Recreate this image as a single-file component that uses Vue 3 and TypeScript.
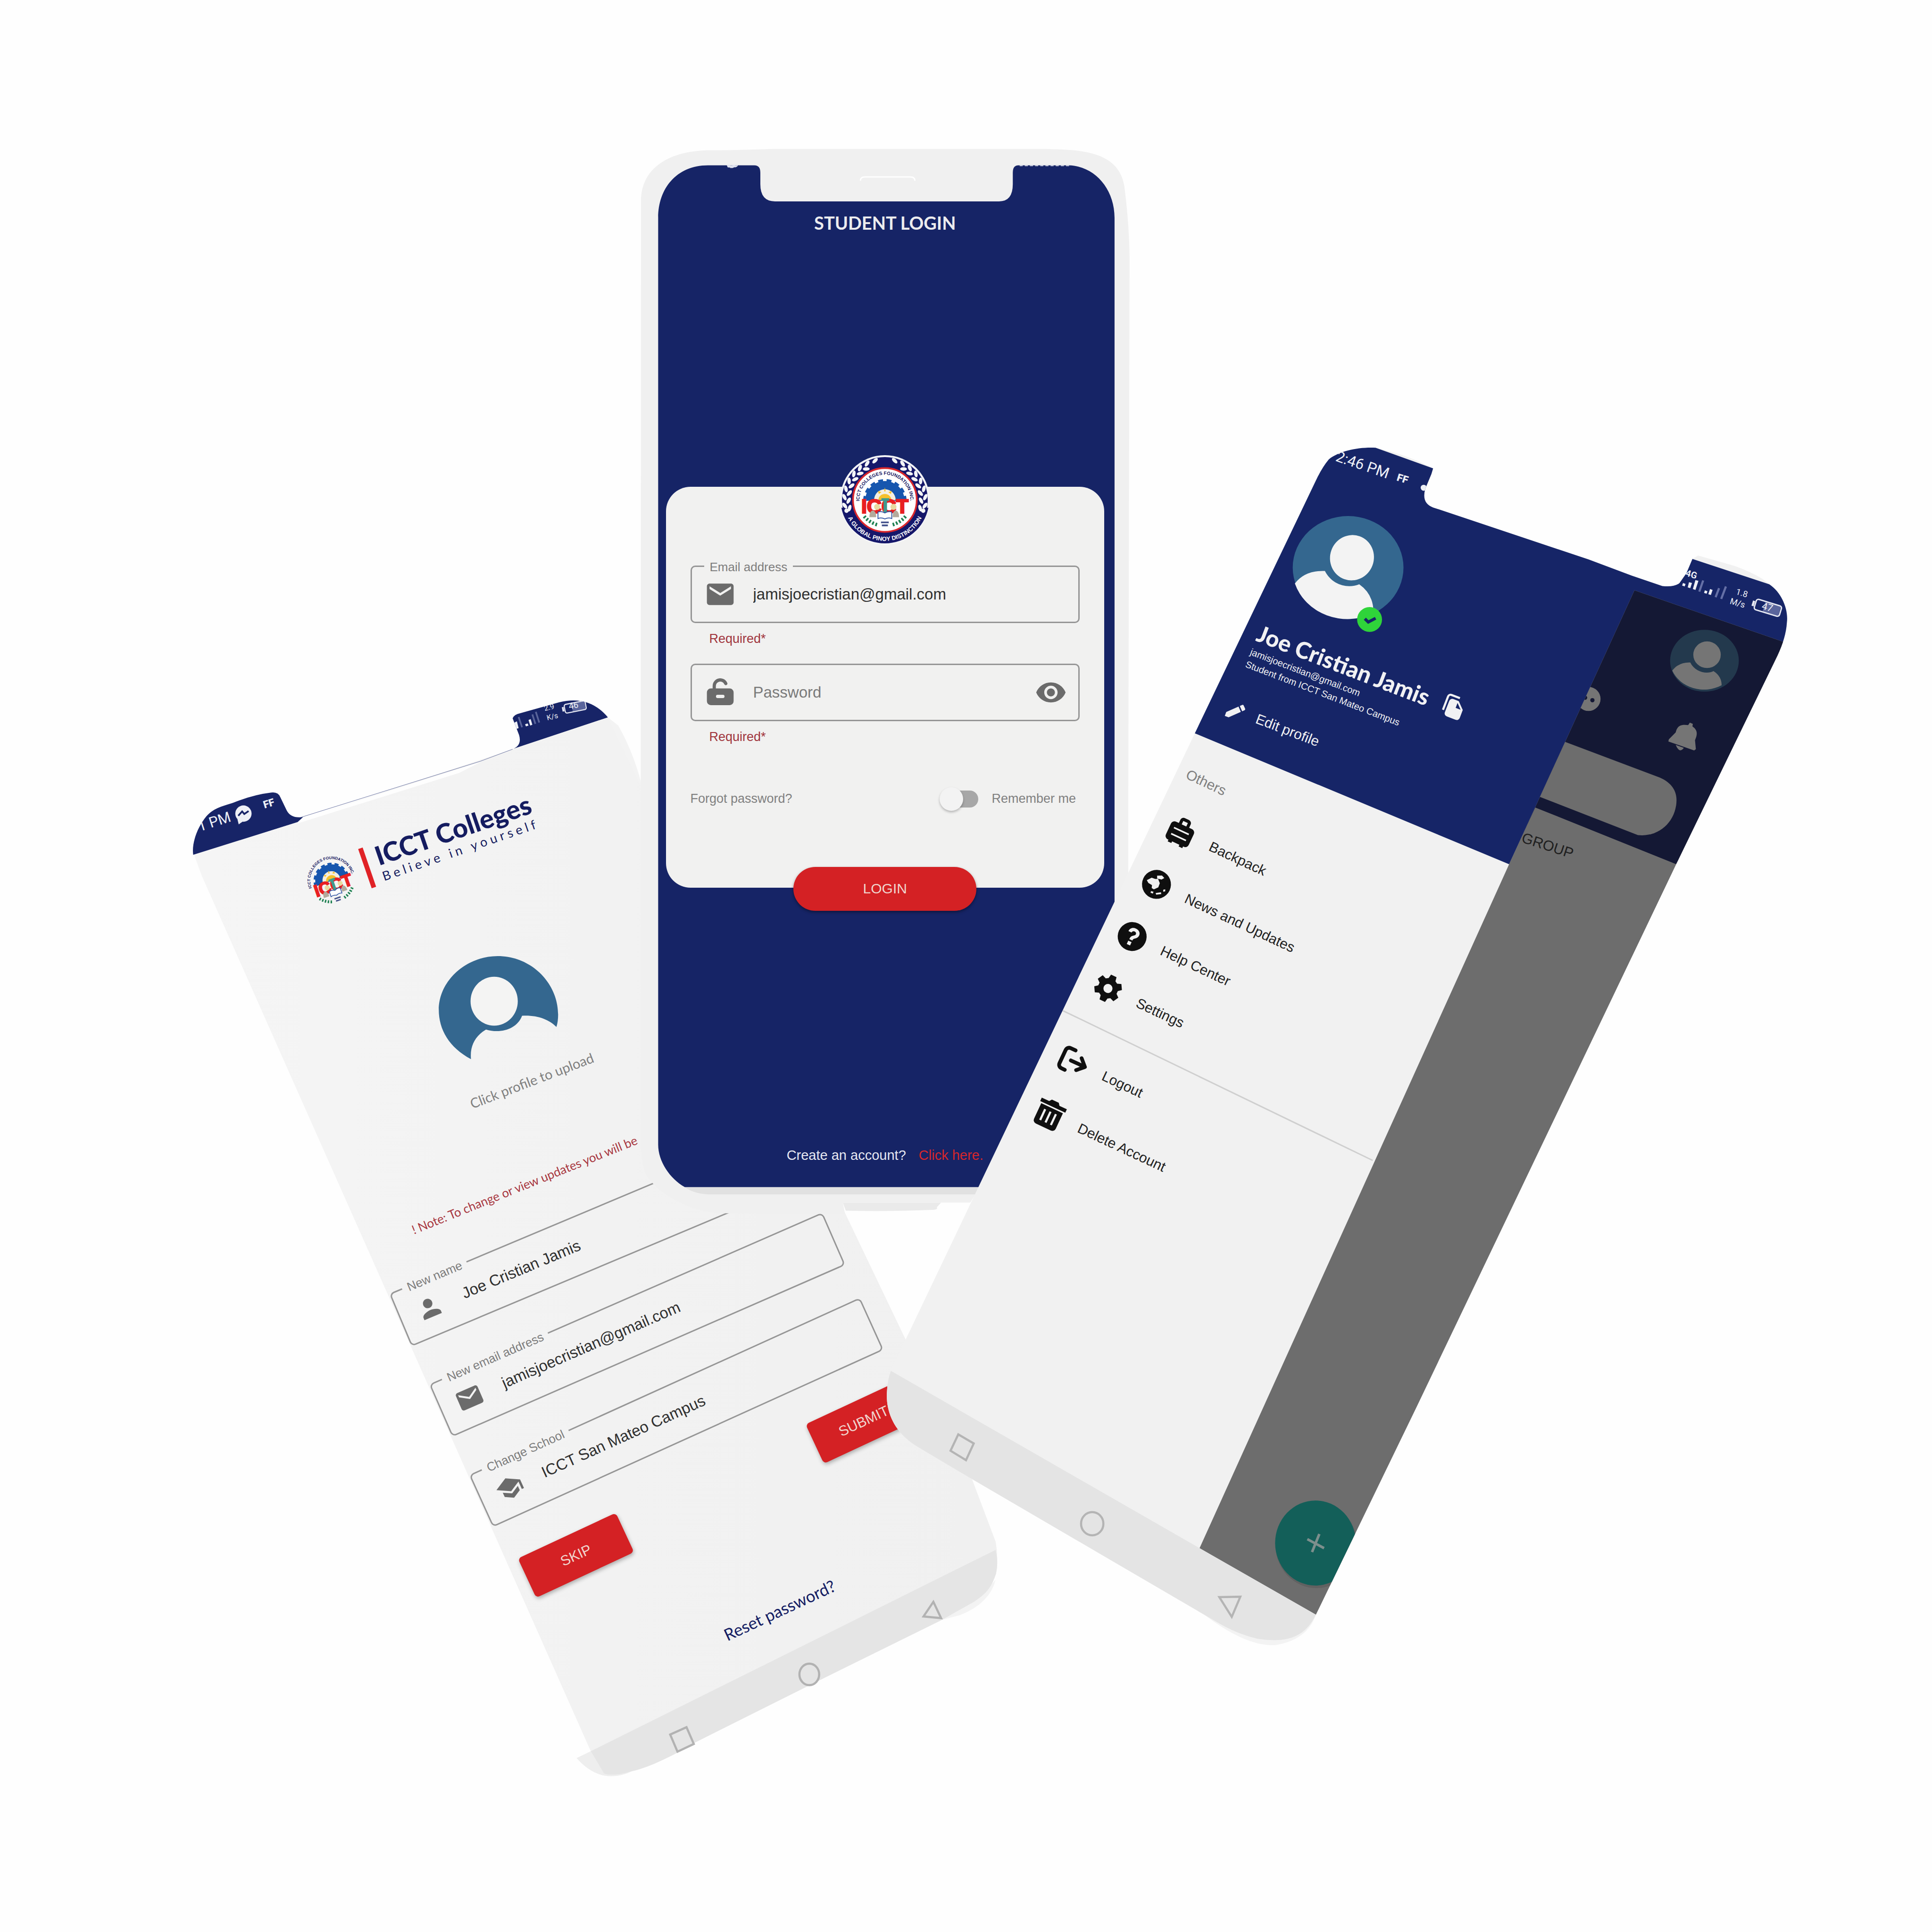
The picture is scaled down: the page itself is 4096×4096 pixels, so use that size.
<script setup lang="ts">
import { ref } from 'vue'

interface Field {
  id: string
  label: string
  icon: string
  value: string
}

interface MenuItem {
  label: string
  icon: string
}

const icons: Record<string, string> = {
  mail: 'M20 4H4c-1.1 0-2 .9-2 2v12c0 1.1.9 2 2 2h16c1.1 0 2-.9 2-2V6c0-1.100-.9-2-2-2zm0 4l-8 5-8-5V6l8 5 8-5v2z',
  person: 'M12 12c2.210 0 4-1.790 4-4s-1.790-4-4-4-4 1.790-4 4 1.790 4 4 4zm0 2c-2.670 0-8 1.340-8 4v2h16v-2c0-2.660-5.330-4-8-4z',
  school: 'M5 13.180v4L12 21l7-3.820v-4L12 17l-7-3.820zM12 3L1 9l11 6 9-4.910V17h2V9L12 3z',
  lock: 'M5 21.500a3 3 0 0 1-3-3v-6.500a3 3 0 0 1 3-3h1.300V7.200a5.700 5.700 0 0 1 10.800-2.600l.2.400a1.200 1.200 0 0 1-2.100 1.100l-.2-.3A3.300 3.300 0 0 0 8.700 7.200V9H19a3 3 0 0 1 3 3v6.500a3 3 0 0 1-3 3zM10 13.800a1.200 1.200 0 0 0 0 2.400h4a1.200 1.200 0 0 0 0-2.400z',
  eye: 'M12 4.500C7 4.500 2.730 7.610 1 12c1.730 4.390 6 7.500 11 7.500s9.270-3.110 11-7.500c-1.730-4.390-6-7.500-11-7.500zM12 17c-2.760 0-5-2.240-5-5s2.240-5 5-5 5 2.240 5 5-2.240 5-5 5zm0-8c-1.660 0-3 1.340-3 3s1.340 3 3 3 3-1.340 3-3-1.340-3-3-3z',
  luggage: 'M7.500 6V3.200A2.700 2.700 0 0 1 10.200.5h3.600a2.700 2.700 0 0 1 2.700 2.700V6H19a3 3 0 0 1 3 3v9.500a3 3 0 0 1-3 3h-.6V23h-3.200v-1.500H8.800V23H5.600v-1.500H5a3 3 0 0 1-3-3V9a3 3 0 0 1 3-3zM10 3v3h4V3zM5.500 10.300v1.300h13v-1.300zM5.500 15.600v1.300h13v-1.300z',
  globe: 'M12 .5a11.500 11.500 0 1 0 0 23 11.500 11.500 0 0 0 0-23zM9.500 5.500l3.500-1.700 2.500 1-1.500 2-3.500.7zM3.600 12.200l2.700-3.400 3-.3 2-1 2.700 2.500.3 3.500-2.500 3-2-.2-.8-2.300-3.300-.3zM10.300 18.700l2-.4.200 1.600-2 .1zM14.300 18.500l3.600-2.300.8 1.200-3.500 2.100zM18.700 13.600l1.300-1 .6 1.500-1.300.9z',
  help: 'M12 .5a11.500 11.500 0 1 0 0 23 11.500 11.500 0 0 0 0-23zM10.600 16.300h2.900v2.900h-2.900zM7.500 9.300c0-2.600 1.900-4.300 4.600-4.300s4.600 1.600 4.600 4c0 1.600-.8 2.600-2 3.500-1 .7-1.200 1.100-1.200 2.100v.2h-2.700v-.5c0-1.700.6-2.500 1.900-3.500.9-.7 1.200-1 1.200-1.700 0-.9-.7-1.600-1.800-1.600s-1.800.7-1.900 1.800z',
  settings: 'M9.600.8h4.800l.6 3.300 2 1.200 3.200-1.200 2.400 4.200-2.600 2.100v2.400l2.600 2.200-2.400 4.200-3.200-1.200-2 1.200-.6 3.300H9.600L9 19l-2-1.200L3.800 19l-2.400-4.200L4 12.800v-2.400L1.400 8.200 3.800 4 7 5.300l2-1.200zM12 8.200a3.600 3.600 0 1 0 0 7.200 3.600 3.600 0 0 0 0-7.200z',
  logout: 'M9.500 3.200H5.200a3 3 0 0 0-3 3v11.600a3 3 0 0 0 3 3h3M9.500 12H21.500M16.500 6.800L21.800 12l-5.300 5.200',
  trash: 'M1 2.800h6.500l1.500-2h6l1.500 2H23v3H1zM2.500 7h19v13.500a3 3 0 0 1-3 3h-13a3 3 0 0 1-3-3zM6.500 10v9.500h1.700V10zM11.200 10v9.500h1.700V10zM15.900 10v9.500h1.700V10z',
  pencil: 'M3 17.500V22h4.500L18 11.500 13.500 7zM21.200 8.300a1.200 1.200 0 0 0 0-1.700l-2.800-2.800a1.200 1.200 0 0 0-1.700 0L14.600 5.900l4.500 4.500z',
  copy: 'M3 18V4.500A3.500 3.500 0 0 1 6.500 1H15v2H6.500A1.500 1.500 0 0 0 5 4.500V18zM9.500 5H15l6.500 6.500v8a3 3 0 0 1-3 3h-9a3 3 0 0 1-3-3V8a3 3 0 0 1 3-3zM14.500 7v5h5z',
}

const email = ref('jamisjoecristian@gmail.com')
const password = ref('')
const remember = ref(false)

const profileFields = ref<Field[]>([
  { id: 'new-name', label: 'New name', icon: 'person', value: 'Joe Cristian Jamis' },
  { id: 'new-email', label: 'New email address', icon: 'mail', value: 'jamisjoecristian@gmail.com' },
  { id: 'school', label: 'Change School', icon: 'school', value: 'ICCT San Mateo Campus' },
])

const mainMenu: MenuItem[] = [
  { label: 'Backpack', icon: 'luggage' },
  { label: 'News and Updates', icon: 'globe' },
  { label: 'Help Center', icon: 'help' },
  { label: 'Settings', icon: 'settings' },
]

const accountMenu: MenuItem[] = [
  { label: 'Logout', icon: 'logout' },
  { label: 'Delete Account', icon: 'trash' },
]

// Wreath leaves, two rows on each side of the seal's upper ring.
const leaves: string[] = []
for (const side of [-1, 1]) {
  for (let i = 0; i < 8; i++) {
    const angle = side * (14 + i * 12)
    leaves.push(`rotate(${angle}) translate(0 -94) rotate(${side * 30})`)
    if (i > 0) leaves.push(`rotate(${angle + side * 5}) translate(0 -84) rotate(${side * -30})`)
  }
}
</script>

<template>
  <main class="stage">
    <!-- Edit profile phone -->
    <svg class="layer" viewBox="0 0 4500 4500" aria-hidden="true">
      <defs>
        <linearGradient id="pale" x1="0" x2="1" y1="0" y2="0">
          <stop offset="0" stop-color="#f5f5f5" />
          <stop offset="0.500" stop-color="#f2f2f2" />
          <stop offset="1" stop-color="#f0f0f0" />
        </linearGradient>
        <clipPath id="left-tabs">
          <path d="M450 1991C446 1962 461 1925 481 1901C500 1880 520 1878 545 1869Q590 1851 632 1846Q648 1844 653 1857L668 1888Q678 1907 706 1903L693 1915zM1196 1744Q1216 1735 1209 1712L1194 1673Q1197 1664 1212 1661L1302 1636Q1372 1618 1416 1671z" />
        </clipPath>
        <symbol id="battery" viewBox="0 0 70 30">
          <path d="M6 10H2V20H6" fill="#e6e8f2" stroke="#e6e8f2" stroke-width="2" />
          <rect x="28" y="4" width="36" height="22" fill="#5a659c" />
          <rect x="8" y="3" width="58" height="24" rx="5" fill="none" stroke="#e6e8f2" stroke-width="3" />
        </symbol>
      </defs>
      <path d="M1416 1671L1440 1690Q1480 1760 1500 1850V2000L1400 1700z" fill="#f3f3f3" />
      <path d="M452 1991L1416 1671 2261 3437 2319 3591Q2326 3630 2320 3665C2310 3695 2300 3710 2270 3730L2194 3773 1888 3924 1614 4061C1560 4095 1500 4120 1473 4125Q1430 4138 1407 4131L1376 4079 470 2040z" fill="url(#pale)" />
      <path d="M2319 3680Q2305 3735 2236 3762L2194 3773 2277 3724z" fill="#f3f3f3" />
      <path d="M1343 4095L1376 4079 1407 4131Q1440 4134 1473 4125Q1400 4160 1343 4095z" fill="#eeeeee" />
      <path d="M1376 4079L2319 3610Q2326 3640 2320 3665C2310 3695 2300 3710 2270 3730L2194 3773 1888 3924 1614 4061C1560 4095 1500 4120 1473 4125Q1430 4138 1407 4131z" fill="#e5e5e5" />
      <g fill="none" stroke="#b2b2b2" stroke-width="5">
        <path d="M1561 4040L1599 4023 1616 4062 1578 4080z" />
        <ellipse cx="1885" cy="3900" rx="23" ry="25" />
        <path d="M2174 3731L2192 3769 2151 3765z" />
      </g>
      <path d="M700 1908L1119 1775 1070 1800 693 1918z" fill="#fefefe" />
      <path d="M700 1904L1119 1773 1194 1745" fill="none" stroke="#5f689a" stroke-width="1" />
      <g clip-path="url(#left-tabs)">
        <path d="M400 1550H1500V1643L1416 1671 1196 1744 693 1915 450 1992H400z" fill="#172467" />
        <g fill="#eef0f6" font-family="Roboto, sans-serif">
          <text font-size="34" transform="translate(465 1937) rotate(-18)">1 PM</text>
          <circle cx="567" cy="1895" r="19" />
          <path d="M553 1908L556 1920 568 1912z" />
          <text font-size="24" font-weight="900" transform="translate(616 1883) rotate(-17)">FF</text>
          <path d="M1198 1683L1204 1680 1208 1696 1202 1698zM1223 1687L1229 1685 1231 1690 1225 1692zM1231 1677L1236 1675 1240 1688 1235 1690z" />
          <text font-size="17" transform="translate(1269 1656) rotate(-14)">2.9</text>
          <text font-size="17" transform="translate(1275 1678) rotate(-14)">K/s</text>
        </g>
        <path d="M555 1900L564 1890 569 1896 579 1889" fill="none" stroke="#172467" stroke-width="4" />
        <path d="M1208 1670L1216 1694M1240 1664L1247 1686M1248 1658L1256 1683" stroke="#59649a" stroke-width="4" />
        <use href="#battery" width="60" height="28" transform="translate(1306 1639) rotate(-11)" />
        <text font-size="20" fill="#eef0f6" font-family="Roboto, sans-serif" transform="translate(1326 1652) rotate(-11)">46</text>
      </g>
      <path d="M1097 2467C1046 2440 1022 2398 1022 2352C1022 2285 1085 2227 1159 2227C1240 2227 1300 2292 1300 2363Q1300 2380 1296 2392C1278 2374 1250 2364 1216 2366C1204 2398 1165 2408 1132 2398C1108 2412 1094 2435 1097 2467z" fill="#34678f" />
      <ellipse cx="1151" cy="2332" rx="55" ry="57" fill="#f4f4f3" />
    </svg>

    <header class="brand">
      <svg class="brand-crest" viewBox="-80 -80 160 160" aria-hidden="true"><use href="#crest" /></svg>
      <span class="brand-bar"></span>
      <div class="brand-text">
        <span class="brand-name">ICCT Colleges</span>
        <span class="brand-tag">Believe in yourself</span>
      </div>
    </header>
    <p class="upload-hint">Click profile to upload</p>
    <p class="note">! Note: To change or view updates you will be</p>

    <form class="profile-form" @submit.prevent>
      <div v-for="f in profileFields" :key="f.id" class="field">
        <label :for="f.id">{{ f.label }}</label>
        <svg class="field-icon" viewBox="0 0 24 24" aria-hidden="true"><path :d="icons[f.icon]" /></svg>
        <input :id="f.id" v-model="f.value" type="text" />
      </div>
      <div class="actions">
        <button type="button" class="action">SKIP</button>
        <button type="submit" class="action">SUBMIT</button>
      </div>
    </form>
    <a href="#reset" class="reset">Reset password?</a>

    <!-- Login phone -->
    <svg class="layer" viewBox="0 0 4500 4500" aria-hidden="true">
      <path d="M1963 2801H2192L2182 2812Q2186 2818 2170 2818Q2080 2822 1970 2820z" fill="#eaeaea" />
      <path d="M1493 469C1493 390 1560 350 1657 350Q1720 350 1800 347H2438C2490 349 2520 349 2555 361C2600 377 2614 405 2619 435Q2630 520 2631 600L2628 1860V2200L2260 2801H1963L1968 2826H1690C1600 2826 1520 2770 1502 2730Q1493 2700 1492 2660z" fill="#f0f0f0" />
      <path d="M1595 2765H2290V2782H1649Q1615 2780 1595 2765z" fill="#e1e1e1" />
      <path d="M1533 507C1533 440 1575 385 1649 385H1757Q1771 385 1771 402V429Q1771 469 1805 469H2327Q2359 469 2359 429V402Q2359 385 2372 385H2490C2550 387 2596 440 2596 507V2300L2300 2765H1595C1560 2745 1533 2705 1533 2666z" fill="#162466" />
      <path d="M2004 421Q2004 412 2014 412H2120Q2131 412 2131 421" fill="none" stroke="#fff" stroke-width="3" />
      <path d="M1694 385H1718Q1714 392 1696 390zM2375 386H2490" fill="#dfe2ee" stroke="#dfe2ee" stroke-width="2" stroke-dasharray="7 5" />
    </svg>

    <section class="login">
      <h1>STUDENT LOGIN</h1>
      <form class="card" @submit.prevent>
        <svg class="seal" viewBox="-104 -104 208 208" role="img" aria-label="ICCT Colleges seal">
          <circle r="104" fill="#f4f5f7" />
          <circle r="87" fill="none" stroke="#15176a" stroke-width="25" />
          <path d="M-101 18A103 103 0 0 0 101 18L70 18A73 73 0 0 1-70 18z" fill="#15176a" />
          <g fill="#f4f5f7">
            <ellipse v-for="(t, i) in leaves" :key="i" rx="8" ry="4" :transform="t" />
            <circle cx="-89" cy="25" r="5" />
            <circle cx="89" cy="25" r="5" />
          </g>
          <circle r="75" fill="#fff" />
          <circle r="74" fill="none" stroke="#d9272c" stroke-width="4" />
          <path id="seal-arc" d="M-95 0A95 95 0 0 0 95 0" fill="none" />
          <text font-size="14" fill="#fff" font-weight="bold" font-family="Liberation Sans, sans-serif">
            <textPath href="#seal-arc" startOffset="50%" text-anchor="middle">A GLOBAL PINOY DISTINCTION</textPath>
          </text>
          <g id="crest">
            <path id="crest-arc" d="M-51 30A59 59 0 1 1 51 30" fill="none" />
            <text font-size="11" fill="#15175f" font-weight="bold" font-family="Liberation Sans, sans-serif">
              <textPath href="#crest-arc" startOffset="50%" text-anchor="middle">ICCT COLLEGES FOUNDATION INC.</textPath>
            </text>
            <path d="M-46 2A46 46 0 0 1 46 2z" fill="#1656ae" />
            <path d="M-46 2A46 46 0 0 1 46 2" fill="none" stroke="#1656ae" stroke-width="9" stroke-dasharray="11 8" />
            <path d="M-25 0A25 25 0 0 1 25 0z" fill="#f4efe0" />
            <path d="M-15 0A15 14 0 0 1 15 0zM-2-20L0-29 2-20zM-14-14L-16-21-8-18zM14-14L16-21 8-18z" fill="#f5c12c" />
            <text x="0" y="31" text-anchor="middle" font-size="47" font-weight="bold" fill="#e81f22" stroke="#e81f22" stroke-width="3" font-family="Liberation Sans, sans-serif">ICCT</text>
            <path d="M-8-4H10V2H5V32H-3V2H-8z" fill="#3f9b8e" />
            <circle cx="-18" cy="16" r="7" fill="#e9d9a0" />
            <circle cx="20" cy="16" r="7" fill="#e9d9a0" />
            <path d="M-36 40q0-14 8-16q8 2 8 16zM18 40q0-14 7-16q8 2 8 16z" fill="#b3aa9c" />
            <path d="M-16 28q8-3 16 2q8-5 16-2v15q-8-3-16 1q-8-4-16-1z" fill="#fff" stroke="#2b4fa0" stroke-width="2" />
            <path d="M-48 38A62 62 0 0 0-16 58" fill="none" stroke="#1f8152" stroke-width="8" stroke-dasharray="4 4" />
            <path d="M48 38A62 62 0 0 1 16 58" fill="none" stroke="#1f8152" stroke-width="8" stroke-dasharray="4 4" />
            <path d="M-9 52H9M-7 59H7" stroke="#44528c" stroke-width="4" />
          </g>
        </svg>
        <div class="field">
          <label for="email">Email address</label>
          <svg class="field-icon" viewBox="0 0 24 24" aria-hidden="true"><path :d="icons.mail" /></svg>
          <input id="email" v-model="email" type="email" />
        </div>
        <p class="required">Required*</p>
        <div class="field">
          <svg class="field-icon" viewBox="0 0 24 24" aria-hidden="true"><path :d="icons.lock" /></svg>
          <input v-model="password" type="password" placeholder="Password" aria-label="Password" />
          <button type="button" class="reveal" aria-label="Show password">
            <svg viewBox="0 0 24 24" aria-hidden="true"><path :d="icons.eye" /></svg>
          </button>
        </div>
        <p class="required">Required*</p>
        <div class="options">
          <a href="#forgot">Forgot password?</a>
          <label class="remember"><input v-model="remember" type="checkbox" role="switch" />Remember me</label>
        </div>
        <button type="submit" class="login-button">LOGIN</button>
      </form>
      <p class="signup">Create an account? <a href="#signup">Click here.</a></p>
    </section>

    <!-- Drawer phone -->
    <svg class="layer" viewBox="0 0 4500 4500" aria-hidden="true">
      <defs>
        <clipPath id="right-shape">
          <path d="M2783 1708L3067 1115Q3080 1088 3095 1070C3120 1050 3165 1041 3204 1043L3338 1091 3334 1104 3320 1138Q3310 1172 3338 1182L3700 1303 3801 1341 3872 1365Q3900 1368 3912 1358L3928 1335 3942 1302 4121 1361C4150 1380 4166 1420 4162 1450Q4160 1485 4140 1527L3904 2013 3300 3276 3065 3761C3040 3812 3000 3828 2929 3817Q2880 3806 2829 3775L2257 3441 2141 3372C2085 3340 2062 3290 2066 3240Q2067 3215 2075 3193L2100 3140 2597 2098z" />
        </clipPath>
        <clipPath id="behind-drawer">
          <path d="M3807 1375L4500 1500V4000H2700L2794 3606 3515 2013z" />
        </clipPath>
      </defs>
      <path d="M3942 1302L3955 1294 4040 1318Q4100 1340 4121 1361zM3204 1043Q3280 1060 3338 1091z" fill="#f1f1f1" />
      <path d="M2800 3757Q2900 3835 2970 3832Q3045 3820 3065 3761L3000 3812 2929 3817z" fill="#f3f3f3" />
      <g clip-path="url(#right-shape)">
        <rect x="2000" y="1000" width="2300" height="3000" fill="#f1f1f1" />
        <path d="M3807 1375L4200 1511V3700L3200 3838 2794 3606 3515 2013z" fill="#6d6d6d" />
        <path d="M2783 1708L3515 2013 3807 1375 4200 1511V1000H2900L2700 1674z" fill="#162567" />
        <path d="M3807 1375L4200 1511 3904 2013 3576 1881 3515 2013z" fill="#141834" />
        <path d="M3576 1881L3904 2013 3800 2230 3515 2013z" fill="#6d6d6d" />
        <g clip-path="url(#behind-drawer)">
          <path d="M3600 1711L3866 1811C3900 1826 3908 1850 3904 1876C3897 1920 3860 1950 3815 1945L3540 1838z" fill="#6d6d6d" />
          <ellipse cx="3970" cy="1539" rx="80" ry="72" fill="#23394d" />
          <ellipse cx="3976" cy="1525" rx="32" ry="31" fill="#757575" />
          <path d="M3895 1562Q3910 1542 3937 1543C3948 1566 3976 1571 3991 1563Q4010 1575 4010 1596A80 72 0 0 1 3895 1562z" fill="#757575" />
          <ellipse cx="3700" cy="1628" rx="28" ry="28" fill="#757575" />
          <circle cx="3709" cy="1631" r="5" fill="#141834" />
          <circle cx="3692" cy="1625" r="5" fill="#141834" />
          <path d="M3887 1722L3903 1706C3906 1692 3914 1686 3932 1689L3936 1683 3943 1686 3942 1692C3953 1700 3955 1708 3948 1724L3950 1745 3946 1748 3886 1727z" fill="#757575" />
          <path d="M3903 1735L3922 1742Q3912 1756 3903 1735z" fill="#757575" />
          <text font-size="34" fill="#1f1f1f" font-family="Liberation Sans, sans-serif" transform="translate(3542 1961) rotate(18)">GROUP</text>
        </g>
        <ellipse cx="3066" cy="3599" rx="95" ry="100" fill="#555" opacity="0.500" />
        <ellipse cx="3064" cy="3594" rx="94" ry="99" fill="#135f59" />
        <path d="M3045 3585L3084 3606M3073 3573L3056 3615" stroke="#7d8f8d" stroke-width="6" />
        <path d="M2075 3193L2794 3606 3065 3761 3100 3900H2000V3150z" fill="#e4e4e4" />
        <g fill="none" stroke="#b4b4b4" stroke-width="5">
          <path d="M2232 3341L2268 3362 2250 3401 2214 3379z" />
          <ellipse cx="2544" cy="3549" rx="26" ry="27" />
          <path d="M2840 3720L2889 3719 2869 3766z" />
        </g>
        <path d="M3967 1352L3958 1378M4004 1370L3996 1391M4020 1366L4009 1395" stroke="#6570a6" stroke-width="5" />
        <use href="#battery" width="74" height="32" transform="translate(4085 1389) rotate(17)" />
        <g fill="#eef0f6" font-family="Roboto, sans-serif">
          <text font-size="35" transform="translate(3109 1073) rotate(19)">2:46 PM</text>
          <text font-size="24" font-weight="900" transform="translate(3252 1119) rotate(17)">FF</text>
          <circle cx="3316" cy="1136" r="7" />
          <text font-size="21" font-weight="700" transform="translate(3925 1341) rotate(16)">4G</text>
          <path d="M3920 1358l6 2-2 6-6-2zM3934 1356l7 2-4 12-6-2zM3949 1351l7 2-7 21-6-2zM3971 1375l6 2-2 6-6-2zM3983 1372l6 2-4 12-6-2z" />
          <text font-size="20" transform="translate(4042 1384) rotate(16)">1.8</text>
          <text font-size="20" transform="translate(4028 1406) rotate(16)">M/s</text>
          <text font-size="23" transform="translate(4102 1418) rotate(16)">47</text>
        </g>
        <ellipse cx="3140" cy="1322" rx="129" ry="120" fill="#34678f" />
        <ellipse cx="3149" cy="1299" rx="51" ry="53" transform="rotate(20 3149 1299)" fill="#f3f3f3" />
        <path d="M3016 1359Q3040 1328 3086 1330C3102 1362 3138 1372 3166 1361Q3200 1385 3199 1428A129 120 0 0 1 3016 1359z" fill="#f3f3f3" />
        <circle cx="3190" cy="1443" r="29" fill="#2fd43a" />
        <path d="M3179 1441L3187 1449 3204 1440" fill="none" stroke="#162567" stroke-width="7" />
      </g>
    </svg>

    <section class="profile">
      <div class="profile-name">
        <h2>Joe Cristian Jamis</h2>
        <button type="button" aria-label="Copy profile">
          <svg viewBox="0 0 24 24" aria-hidden="true"><path :d="icons.copy" fill-rule="evenodd" /></svg>
        </button>
      </div>
      <p>jamisjoecristian@gmail.com</p>
      <p>Student from ICCT San Mateo Campus</p>
      <a href="#edit" class="edit-profile">
        <svg viewBox="0 0 24 24" aria-hidden="true"><path :d="icons.pencil" /></svg>
        Edit profile
      </a>
    </section>

    <nav class="menu" aria-label="Others">
      <h3>Others</h3>
      <a v-for="m in mainMenu" :key="m.label" href="#menu">
        <svg viewBox="0 0 24 24" aria-hidden="true"><path :d="icons[m.icon]" fill-rule="evenodd" /></svg>
        {{ m.label }}
      </a>
      <hr />
      <a v-for="m in accountMenu" :key="m.label" href="#account">
        <svg viewBox="0 0 24 24" aria-hidden="true">
          <path :d="icons[m.icon]" fill-rule="evenodd" :class="{ outlined: m.icon === 'logout' }" />
        </svg>
        {{ m.label }}
      </a>
    </nav>
  </main>
</template>

<style>
body {
  margin: 0;
  background: #fefefe;
}
</style>

<style scoped>
.stage {
  position: relative;
  width: 100%;
  aspect-ratio: 1;
  overflow: hidden;
  background: #fefefe;
  font-family: "Liberation Sans", Arial, sans-serif;
  font-size: 27px;
  color: #222;
}

.stage * {
  box-sizing: border-box;
}

h1,
h2,
h3,
p,
hr {
  margin: 0;
  font-weight: normal;
}

a {
  color: inherit;
  text-decoration: none;
}

button,
input {
  font: inherit;
  color: inherit;
  border: 0;
  padding: 0;
  background: none;
}

.layer {
  position: absolute;
  inset: 0;
  width: 100%;
  height: 100%;
}

/* Tilted blocks of the side phones turn about their own top left corner. */
.brand,
.upload-hint,
.note,
.profile-form,
.reset,
.profile,
.menu {
  position: absolute;
  transform-origin: 0 0;
  white-space: nowrap;
}

.field {
  position: relative;
  height: 122px;
  border: 3px solid #969696;
  border-radius: 10px;
  color: #2f2f2f;
}

.field label {
  position: absolute;
  top: -16px;
  left: 26px;
  padding: 0 12px;
  background: #f1f1f0;
  font-size: 26px;
  line-height: 32px;
  color: #7d7d7d;
}

.field-icon {
  position: absolute;
  top: 24px;
  left: 26px;
  width: 68px;
  height: 68px;
  fill: #6b6b6b;
}

.field input {
  width: 100%;
  height: 100%;
  padding-left: 130px;
  font-size: 33px;
  outline: 0;
}

.field input::placeholder {
  color: #7a7a7a;
  opacity: 1;
}

/* Edit profile phone */
.brand {
  left: 15.530%;
  top: 44.730%;
  display: flex;
  align-items: center;
  height: 108px;
  transform: rotate(-19deg);
}

.brand-crest {
  width: 122px;
  height: 122px;
  margin-left: -9px;
}

.brand-bar {
  width: 10px;
  height: 88px;
  margin: 0 20px 0 14px;
  background: #e02226;
}

.brand-text {
  display: flex;
  flex-direction: column;
  font-family: Lato, sans-serif;
  color: #151c60;
}

.brand-name {
  font-size: 56px;
  font-weight: 900;
  line-height: 56px;
}

.brand-tag {
  font-size: 27px;
  line-height: 34px;
  letter-spacing: 7px;
}

.upload-hint {
  left: 24.200%;
  top: 56.750%;
  font: 29px/36px Lato, sans-serif;
  color: #808080;
  transform: rotate(-21deg);
}

.note {
  left: 21.200%;
  top: 63.300%;
  font: 26px/32px Lato, sans-serif;
  color: #a8373f;
  transform: rotate(-22deg);
}

.profile-form {
  left: 20.110%;
  top: 66.960%;
  display: flex;
  flex-direction: column;
  gap: 88px;
  width: 910px;
  transform: rotate(-24deg);
}

/* The screen recedes, so the rows fan out slightly. */
.profile-form .field {
  transform: rotate(0.400deg);
  transform-origin: 0 50%;
}

.profile-form .field:first-child {
  transform: rotate(1.200deg);
}

.profile-form .field:nth-child(3) {
  transform: rotate(-0.400deg);
}

.profile-form .field label {
  background: #f3f3f3;
}

.profile-form .field-icon {
  top: 28px;
  left: 34px;
  width: 60px;
  height: 60px;
}

.profile-form .field input {
  padding-left: 140px;
}

.actions {
  display: flex;
  justify-content: space-between;
  width: 902px;
  margin: -6px 0 0 22px;
  transform: rotate(-1deg);
  transform-origin: 0 0;
}

.action {
  width: 229px;
  height: 92px;
  border-radius: 8px;
  background: #d42124;
  box-shadow: 0 4px 8px rgb(0 0 0 / 30%);
  font-size: 30px;
  color: #f0d6cf;
}

.reset {
  left: 37.300%;
  top: 84.200%;
  font: 35px/40px Lato, sans-serif;
  color: #141d63;
  transform: rotate(-25deg);
}

/* Login phone */
.login {
  position: absolute;
  left: 34.070%;
  top: 8.560%;
  width: 23.620%;
  height: 52.900%;
  display: flex;
  flex-direction: column;
  padding: 0 22px 0 16px;
}

.login h1 {
  padding-top: 97px;
  height: 681px;
  font: bold 38px/48px Lato, sans-serif;
  text-align: center;
  color: #ececee;
}

.card {
  position: relative;
  height: 850px;
  padding: 167px 52px 0;
  border-radius: 52px;
  background: #f1f1f0;
}

.seal {
  position: absolute;
  top: -67px;
  left: 50%;
  width: 190px;
  height: 190px;
  margin-left: -95px;
}

.required {
  margin: 18px 0 38px 40px;
  line-height: 30px;
  color: #a0343c;
}

.reveal {
  position: absolute;
  top: 24px;
  right: 24px;
  width: 68px;
  height: 68px;
  fill: #6b6b6b;
}

.options {
  display: flex;
  align-items: center;
  justify-content: space-between;
  height: 50px;
  margin-top: 92px;
  padding-right: 8px;
  color: #808080;
}

.remember {
  display: flex;
  align-items: center;
  gap: 28px;
}

.remember input {
  appearance: none;
  position: relative;
  width: 82px;
  height: 50px;
  margin: 0;
}

.remember input::before {
  content: "";
  position: absolute;
  inset: 7px 0 7px 18px;
  border-radius: 18px;
  background: #a7a7a7;
}

.remember input::after {
  content: "";
  position: absolute;
  left: 0;
  width: 50px;
  height: 50px;
  border-radius: 50%;
  background: #f3f3f3;
  box-shadow: 0 3px 5px rgb(0 0 0 / 25%);
}

.login-button {
  position: absolute;
  left: 50%;
  bottom: -49px;
  width: 388px;
  height: 93px;
  margin-left: -194px;
  border-radius: 47px;
  background: #d42124;
  box-shadow: 0 3px 6px rgb(0 0 0 / 40%);
  font-size: 30px;
  color: #f0d6cf;
}

.signup {
  margin-top: auto;
  padding-bottom: 50px;
  font-size: 29px;
  line-height: 36px;
  text-align: center;
  color: #e6e8f2;
}

.signup a {
  margin-left: 19px;
  color: #d9262c;
}

/* Drawer phone */
.profile {
  left: 65.380%;
  top: 32.040%;
  display: flex;
  flex-direction: column;
  color: #f1f1f3;
  font-size: 20px;
  line-height: 28px;
  transform: rotate(21deg);
}

.profile-name {
  display: flex;
  gap: 28px;
  align-items: center;
  height: 60px;
}

.profile-name h2 {
  font: 900 49px/60px Lato, sans-serif;
}

.profile-name button {
  width: 54px;
  height: 54px;
}

.profile svg {
  fill: #f1f1f3;
}

.edit-profile {
  display: flex;
  align-items: center;
  gap: 24px;
  height: 40px;
  margin-top: 66px;
  font-size: 30px;
}

.edit-profile svg {
  width: 46px;
  height: 46px;
  margin-left: -8px;
}

.menu {
  left: 61.050%;
  top: 39.340%;
  width: 730px;
  display: flex;
  flex-direction: column;
  font-size: 30px;
  transform: rotate(25deg);
}

.menu h3 {
  height: 40px;
  margin-bottom: 37px;
  padding-left: 26px;
  font-size: 30px;
  line-height: 40px;
  color: #808080;
}

.menu a {
  display: flex;
  align-items: center;
  gap: 36px;
  height: 122px;
  padding-left: 35px;
}

.menu svg {
  width: 64px;
  height: 64px;
  overflow: visible;
  fill: #0f0f0f;
}

.menu hr {
  height: 3px;
  margin: 20px 0 26px;
  border: 0;
  background: #cfcfcf;
  transform: rotate(0.800deg);
  transform-origin: 0 0;
}

.outlined {
  fill: none;
  stroke: #0f0f0f;
  stroke-width: 3;
  stroke-linecap: round;
  stroke-linejoin: round;
}
</style>
